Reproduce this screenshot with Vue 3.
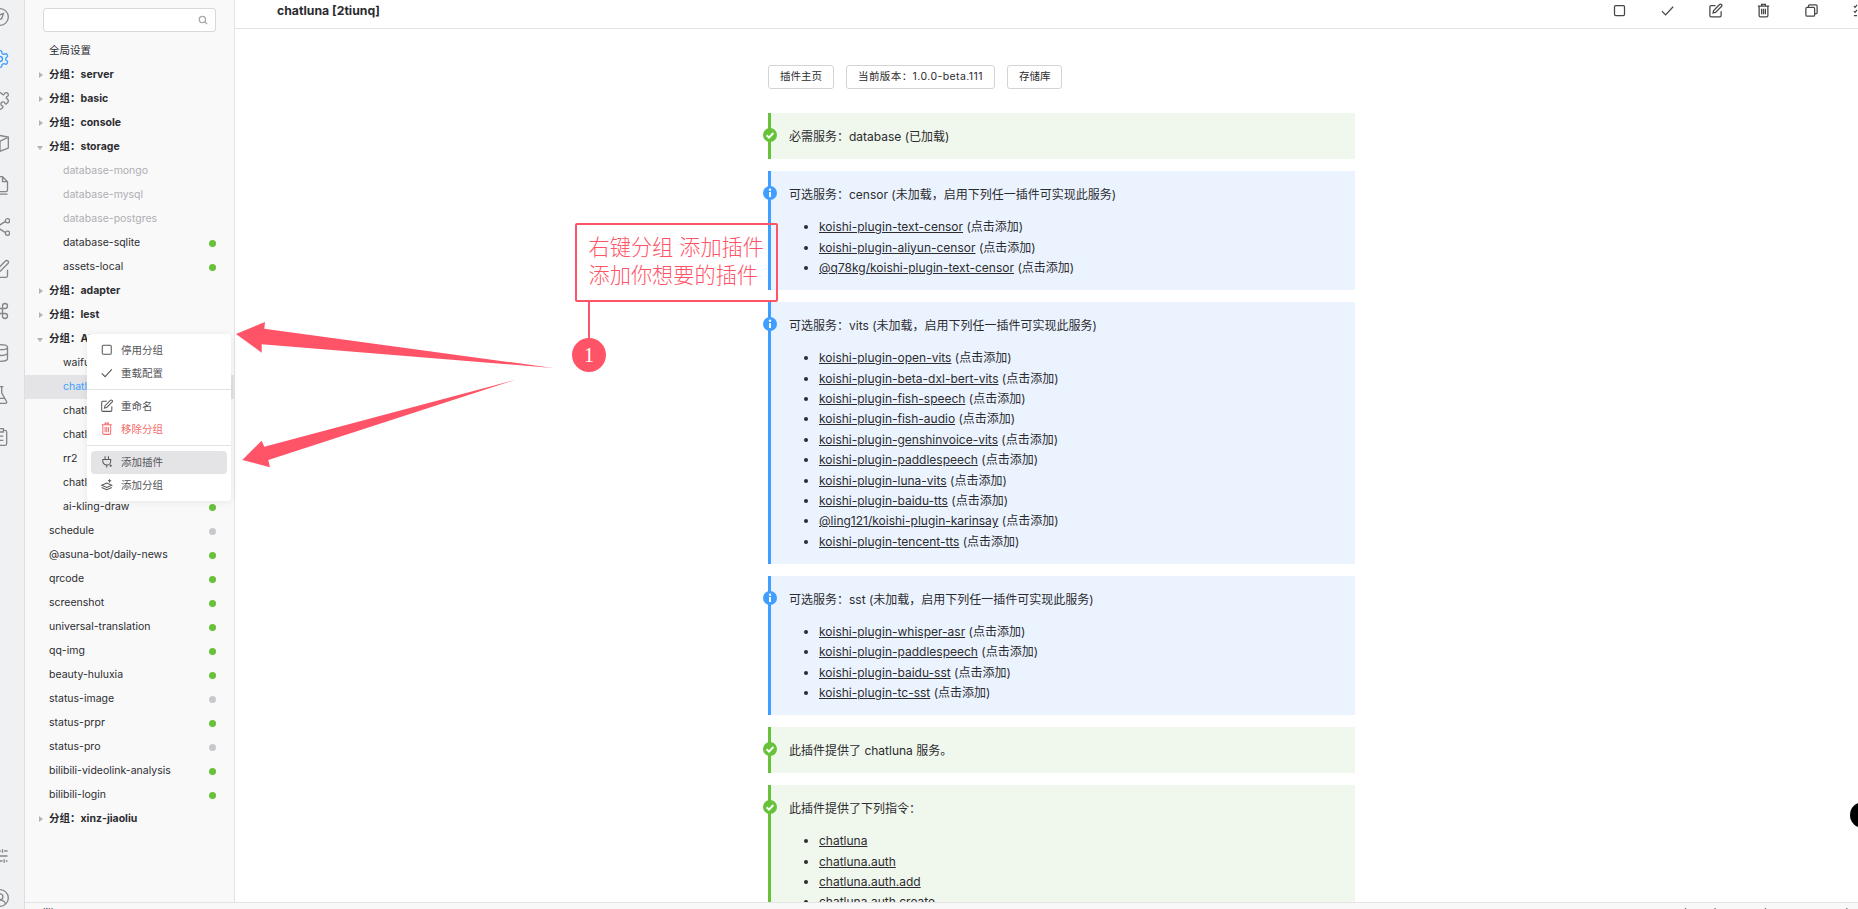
<script setup>
const icons = {
  compass: 'M12 2a10 10 0 1 0 0 20a10 10 0 1 0 0-20z M16 8l-2 6l-6 2l2-6z',
  gear: 'M12.22 2h-.44a2 2 0 0 0-2 2v.18a2 2 0 0 1-1 1.73l-.43.25a2 2 0 0 1-2 0l-.15-.08a2 2 0 0 0-2.73.73l-.22.38a2 2 0 0 0 .73 2.73l.15.1a2 2 0 0 1 1 1.72v.51a2 2 0 0 1-1 1.74l-.15.09a2 2 0 0 0-.73 2.73l.22.38a2 2 0 0 0 2.73.73l.15-.08a2 2 0 0 1 2 0l.43.25a2 2 0 0 1 1 1.73V20a2 2 0 0 0 2 2h.44a2 2 0 0 0 2-2v-.18a2 2 0 0 1 1-1.73l.43-.25a2 2 0 0 1 2 0l.15.08a2 2 0 0 0 2.73-.73l.22-.39a2 2 0 0 0-.73-2.73l-.15-.08a2 2 0 0 1-1-1.74v-.5a2 2 0 0 1 1-1.74l.15-.09a2 2 0 0 0 .73-2.73l-.22-.38a2 2 0 0 0-2.73-.73l-.15.08a2 2 0 0 1-2 0l-.43-.25a2 2 0 0 1-1-1.73V4a2 2 0 0 0-2-2z M12 9a3 3 0 1 0 0 6a3 3 0 1 0 0-6z',
  puzzle: 'M19.439 7.85c-.049.322.059.648.289.878l1.568 1.568c.47.47.706 1.087.706 1.704s-.235 1.233-.706 1.704l-1.611 1.611a.98.98 0 0 1-.837.276c-.47-.07-.802-.48-.968-.925a2.501 2.501 0 1 0-3.214 3.214c.446.166.855.497.925.968a.979.979 0 0 1-.276.837l-1.61 1.61a2.404 2.404 0 0 1-1.705.707 2.402 2.402 0 0 1-1.704-.706l-1.568-1.568a1.026 1.026 0 0 0-.877-.29c-.493.074-.84.504-1.02.968a2.5 2.5 0 1 1-3.237-3.237c.464-.18.894-.527.967-1.02a1.026 1.026 0 0 0-.289-.877l-1.568-1.568A2.402 2.402 0 0 1 1.998 12c0-.617.236-1.234.706-1.704L4.23 8.77c.24-.24.581-.353.917-.303.515.077.877.528 1.073 1.01a2.5 2.5 0 1 0 3.259-3.259c-.482-.196-.933-.558-1.01-1.073-.05-.336.062-.676.303-.917l1.525-1.525A2.402 2.402 0 0 1 12 1.998c.617 0 1.234.236 1.704.706l1.568 1.568c.23.23.556.338.877.29.493-.074.84-.504 1.02-.968a2.5 2.5 0 1 1 3.237 3.237c-.464.18-.894.527-.967 1.02Z',
  box: 'M3 7l9-4l10 2v13l-10 4l-9-3z M3 7l9 3l10-5 M12 10v12',
  file: 'M5 2h10l6 6v10a2 2 0 0 1-2 2H5a2 2 0 0 1-2-2V4a2 2 0 0 1 2-2z M15 2v6h6 M4 23h17',
  share: 'M8 12L19 5M8 12L19 19 M21 2a2.5 2.5 0 1 0 0 5a2.5 2.5 0 1 0 0-5z M21 17a2.5 2.5 0 1 0 0 5a2.5 2.5 0 1 0 0-5z',
  edit: 'M12 4H5a2 2 0 0 0-2 2v14a2 2 0 0 0 2 2h14a2 2 0 0 0 2-2v-7 M18.5 2.5a2.1 2.1 0 0 1 3 3L12 15l-4 1l1-4z',
  command: 'M18 3a3 3 0 0 0-3 3v12a3 3 0 0 0 3 3a3 3 0 0 0 3-3a3 3 0 0 0-3-3H6a3 3 0 0 0-3 3a3 3 0 0 0 3 3a3 3 0 0 0 3-3V6a3 3 0 0 0-3-3a3 3 0 0 0-3 3a3 3 0 0 0 3 3h12a3 3 0 0 0 3-3a3 3 0 0 0-3-3z',
  db: 'M3 5c0-1.7 4-3 9-3s9 1.3 9 3s-4 3-9 3s-9-1.3-9-3z M3 5v14c0 1.7 4 3 9 3s9-1.3 9-3V5 M3 12c0 1.7 4 3 9 3s9-1.3 9-3',
  flask: 'M10 2v7.5L4 20a1.5 1.5 0 0 0 1.3 2h13.4a1.5 1.5 0 0 0 1.3-2L14 9.5V2 M8 2h8 M7 16h10',
  clipboard: 'M8 4H6a2 2 0 0 0-2 2v14a2 2 0 0 0 2 2h12a2 2 0 0 0 2-2V6a2 2 0 0 0-2-2h-2 M8 2h8v4H8z M8 11h8M8 16h8',
  sliders: 'M3 6h10M17 6h4M3 12h3M10 12h11M3 18h12M19 18h2 M15 4v4 M8 10v4 M17 16v4',
  user: 'M12 2a10 10 0 1 0 0 20a10 10 0 1 0 0-20z M12 7a3.5 3.5 0 1 0 0 7a3.5 3.5 0 1 0 0-7z M5.5 19c1-3 3.5-4.5 6.5-4.5s5.500 1.500 6.500 4.500',
  square: 'M6 4h12a2 2 0 0 1 2 2v12a2 2 0 0 1-2 2H6a2 2 0 0 1-2-2V6a2 2 0 0 1 2-2z',
  check: 'M3 13l6 6L21 6',
  trash: 'M9 2h6v3H9z M3 5h18 M5 5v15a2 2 0 0 0 2 2h10a2 2 0 0 0 2-2V5 M9 9v9M12 9v9M15 9v9',
  copy: 'M9 3h10a2 2 0 0 1 2 2v10a2 2 0 0 1-2 2h-2V9a2 2 0 0 0-2-2H7V5a2 2 0 0 1 2-2z M5 7h10a2 2 0 0 1 2 2v10a2 2 0 0 1-2 2H5a2 2 0 0 1-2-2V9a2 2 0 0 1 2-2z',
  list: 'M3 5l2 2l3-4 M3 13l2 2l3-4 M12 5h9M12 13h9 M3 20h5M12 20h9',
  plug: 'M9 2v6M15 2v6M5 8h14v3a7 7 0 0 1-14 0z M12 18v4 M19 17v4M17 19h4',
  layers: 'M12 9L3 13l9 4l9-4z M3 17l9 4l9-4 M17 2v6M14 5h6',
  search: 'M10.500 3a7.500 7.500 0 1 0 0 15a7.500 7.500 0 1 0 0-15z M16 16l6 6',
}
const railTop = [
  ['compass'], ['gear', true], ['puzzle'], ['box'], ['file'], ['share'],
  ['edit'], ['command'], ['db'], ['flask'], ['clipboard'],
]
const rows = [
  { t: '全局设置', k: 'root' },
  { t: '分组：server', k: 'group' }, { t: '分组：basic', k: 'group' }, { t: '分组：console', k: 'group' },
  { t: '分组：storage', k: 'group', open: true },
  { t: 'database-mongo', k: 'child', off: true }, { t: 'database-mysql', k: 'child', off: true },
  { t: 'database-postgres', k: 'child', off: true },
  { t: 'database-sqlite', k: 'child', dot: 'on' }, { t: 'assets-local', k: 'child', dot: 'on' },
  { t: '分组：adapter', k: 'group' }, { t: '分组：lest', k: 'group' },
  { t: '分组：AI', k: 'group', open: true },
  { t: 'waifu', k: 'child', dot: 'on' }, { t: 'chatluna', k: 'child', dot: 'on', active: true },
  { t: 'chatluna-a', k: 'child', dot: 'on' }, { t: 'chatluna-b', k: 'child', dot: 'on' },
  { t: 'rr2', k: 'child', dot: 'on' }, { t: 'chatluna-c', k: 'child', dot: 'on' },
  { t: 'ai-kling-draw', k: 'child', dot: 'on' },
  { t: 'schedule', k: 'root', dot: 'idle' }, { t: '@asuna-bot/daily-news', k: 'root', dot: 'on' },
  { t: 'qrcode', k: 'root', dot: 'on' }, { t: 'screenshot', k: 'root', dot: 'on' },
  { t: 'universal-translation', k: 'root', dot: 'on' }, { t: 'qq-img', k: 'root', dot: 'on' },
  { t: 'beauty-huluxia', k: 'root', dot: 'on' }, { t: 'status-image', k: 'root', dot: 'idle' },
  { t: 'status-prpr', k: 'root', dot: 'on' }, { t: 'status-pro', k: 'root', dot: 'idle' },
  { t: 'bilibili-videolink-analysis', k: 'root', dot: 'on' }, { t: 'bilibili-login', k: 'root', dot: 'on' },
  { t: '分组：xinz-jiaoliu', k: 'group' },
]
const add = ' (点击添加)'
const alerts = [
  { c: 'ok', t: '必需服务：database (已加载)' },
  { c: 'info', t: '可选服务：censor (未加载，启用下列任一插件可实现此服务)', tail: add,
    l: ['koishi-plugin-text-censor', 'koishi-plugin-aliyun-censor', '@q78kg/koishi-plugin-text-censor'] },
  { c: 'info', t: '可选服务：vits (未加载，启用下列任一插件可实现此服务)', tail: add,
    l: ['koishi-plugin-open-vits', 'koishi-plugin-beta-dxl-bert-vits', 'koishi-plugin-fish-speech', 'koishi-plugin-fish-audio', 'koishi-plugin-genshinvoice-vits', 'koishi-plugin-paddlespeech', 'koishi-plugin-luna-vits', 'koishi-plugin-baidu-tts', '@ling121/koishi-plugin-karinsay', 'koishi-plugin-tencent-tts'] },
  { c: 'info', t: '可选服务：sst (未加载，启用下列任一插件可实现此服务)', tail: add,
    l: ['koishi-plugin-whisper-asr', 'koishi-plugin-paddlespeech', 'koishi-plugin-baidu-sst', 'koishi-plugin-tc-sst'] },
  { c: 'ok', t: '此插件提供了 chatluna 服务。' },
  { c: 'ok', t: '此插件提供了下列指令：', tail: '',
    l: ['chatluna', 'chatluna.auth', 'chatluna.auth.add', 'chatluna.auth.create'] },
]
const menu = [
  [{ i: 'square', t: '停用分组' }, { i: 'check', t: '重载配置' }],
  [{ i: 'edit', t: '重命名' }, { i: 'trash', t: '移除分组', red: true }],
  [{ i: 'plug', t: '添加插件', hover: true }, { i: 'layers', t: '添加分组' }],
]
</script>

<template>
  <div class="page">
    <nav class="rail">
      <div class="rail-top">
        <div v-for="r in railTop" :key="r[0]" class="rail-item" :class="{ on: r[1] }">
          <svg viewBox="0 0 24 24" class="rail-icon"><path :d="icons[r[0]]" /></svg>
        </div>
      </div>
      <div class="rail-bottom">
        <div class="rail-item"><svg viewBox="0 0 24 24" class="rail-icon"><path :d="icons.sliders" /></svg></div>
        <div class="rail-item"><svg viewBox="0 0 24 24" class="rail-icon"><path :d="icons.user" /></svg></div>
      </div>
    </nav>

    <div class="shell">
      <div class="work">
        <aside class="side">
          <div class="search">
            <svg viewBox="0 0 24 24" class="search-icon"><path :d="icons.search" /></svg>
          </div>
          <div
            v-for="r in rows"
            :key="r.t"
            class="row"
            :class="[r.k, { off: r.off, active: r.active }]"
          >
            <span v-if="r.k === 'group'" class="caret" :class="{ open: r.open }"></span>
            <span class="row-text">{{ r.t }}</span>
            <span v-if="r.dot" class="dot" :class="r.dot"></span>
          </div>
        </aside>

        <main class="main">
          <header class="head">
            <b class="title">chatluna [2tiunq]</b>
            <div class="tools">
              <svg v-for="n in ['square', 'check', 'edit', 'trash', 'copy', 'list']" :key="n" viewBox="0 0 24 24" class="tool"><path :d="icons[n]" /></svg>
            </div>
          </header>
          <section class="body">
            <div class="links">
              <span class="btn">插件主页</span>
              <span class="btn version">当前版本：1.0.0-beta.111</span>
              <span class="btn">存储库</span>
            </div>
            <div v-for="a in alerts" :key="a.t" class="alert" :class="[a.c, { listed: a.l }]">
              <svg class="badge" viewBox="0 0 14 14">
                <circle cx="7" cy="7" r="7" class="badge-bg" />
                <path v-if="a.c === 'ok'" d="M3.600 7.200l2.400 2.400l4.400-4.600" class="badge-check" />
                <template v-else>
                  <circle cx="7" cy="3.800" r="1.200" class="badge-dot" />
                  <path d="M7 6v5" class="badge-i" />
                </template>
              </svg>
              <p class="alert-title">{{ a.t }}</p>
              <ul v-if="a.l" class="alert-list">
                <li v-for="x in a.l" :key="x"><a class="plugin">{{ x }}</a>{{ a.tail }}</li>
              </ul>
            </div>
          </section>
        </main>
      </div>
      <footer class="status">
        <span>lill</span>
        <span class="status-right"><span>l</span><span>b</span><span>d</span><span>b</span></span>
      </footer>
    </div>

    <div class="ctx">
      <template v-for="(g, gi) in menu" :key="gi">
        <hr v-if="gi" class="ctx-line" />
        <div v-for="m in g" :key="m.t" class="ctx-item" :class="{ red: m.red, hover: m.hover }">
          <svg viewBox="0 0 24 24" class="ctx-icon"><path :d="icons[m.i]" /></svg>
          <span class="ctx-text">{{ m.t }}</span>
        </div>
      </template>
    </div>

    <svg class="arrows" viewBox="0 0 1858 909">
      <polygon points="236,334 265,322 264.300,328.700 553,368 261.700,344.300 261.700,352.700" />
      <polygon points="242.300,460 261.700,440.700 264.300,446.700 515,380 268.300,460 270,467.300" />
    </svg>
    <div class="note">右键分组 添加插件<br />添加你想要的插件</div>
    <div class="stem"></div>
    <div class="pin">1</div>
    <div class="float-ball"></div>
  </div>
</template>

<style>
html, body { margin: 0; overflow: hidden; }
</style>

<style scoped>
.page {
  position: relative;
  display: flex;
  width: 1858px;
  height: 909px;
  overflow: hidden;
  background: #fff;
  color: #2c2c30;
  font: 10.5px/20px Inter, "Noto Sans CJK SC", sans-serif;
}
.rail {
  flex: 0 0 24px;
  display: flex;
  flex-direction: column;
  justify-content: space-between;
  overflow: hidden;
  background: #f0f1f3;
  border-right: 1px solid #dedee1;
}
.rail-top { margin-top: -4px; }
.rail-bottom { margin-bottom: -10px; }
.rail-item {
  height: 42px;
  display: flex;
  align-items: center;
  color: #85858b;
}
.rail-item.on { color: #409eff; }
.rail-icon {
  flex: none;
  width: 20px;
  height: 20px;
  margin-left: -10px;
  fill: none;
  stroke: currentColor;
  stroke-width: 1.6;
}
.shell {
  flex: 1;
  min-width: 0;
  display: flex;
  flex-direction: column;
}
.work {
  flex: 1;
  min-height: 0;
  display: flex;
}
.side {
  flex: 0 0 209px;
  background: #f9f9fa;
  border-right: 1px solid #e3e3e5;
  overflow: hidden;
}
.search {
  height: 22px;
  margin: 8px 18px 7px 18px;
  border: 1px solid #d8d8da;
  border-radius: 3px;
  background: #fff;
  display: flex;
  align-items: center;
  justify-content: flex-end;
  padding-right: 7px;
}
.search-icon {
  width: 10px;
  height: 10px;
  fill: none;
  stroke: #a8a8ac;
  stroke-width: 3;
}
.row {
  position: relative;
  height: 24px;
  display: flex;
  align-items: center;
  line-height: 24px;
  padding: 0 18px 0 24px;
  white-space: nowrap;
}
.row.child { padding-left: 38px; }
.row.group { font-weight: 700; }
.row.off { color: #aeaeb2; }
.row.active { background: #e4e4e6; color: #409eff; }
.row-text { flex: 1; }
.caret {
  position: absolute;
  left: 14px;
  top: 9px;
  border-style: solid;
  border-width: 3px 0 3px 4px;
  border-color: transparent transparent transparent #b4b4b8;
}
.caret.open {
  left: 12px;
  top: 10.500px;
  border-width: 4px 3px 0 3px;
  border-color: #b4b4b8 transparent transparent transparent;
}
.dot {
  width: 7px;
  height: 7px;
  border-radius: 50%;
}
.dot.on { background: #67c23a; }
.dot.idle { background: #c8c8cc; }
.main {
  flex: 1;
  min-width: 0;
  overflow: hidden;
  background: #fff;
}
.head {
  height: 28px;
  box-sizing: content-box;
  display: flex;
  align-items: center;
  justify-content: space-between;
  padding: 0 0 0 42px;
  border-bottom: 1px solid #e4e4e6;
  margin-bottom: -1px;
}
.title {
  font-size: 12.250px;
  font-weight: 700;
  margin-top: -6px;
}
.tools {
  display: flex;
  gap: 33px;
  margin-right: -8.500px;
  margin-top: -8px;
}
.tool {
  width: 15px;
  height: 15px;
  fill: none;
  stroke: #46464a;
  stroke-width: 2;
}
.body {
  width: 587px;
  margin-left: 533px;
  padding-top: 37px;
}
.links {
  display: flex;
  gap: 12px;
  margin-bottom: 24px;
}
.btn {
  height: 24px;
  box-sizing: border-box;
  line-height: 22px;
  padding: 0 11px;
  border: 1px solid #d4d4d6;
  border-radius: 3px;
}
.btn.version { letter-spacing: .42px; }
.alert {
  position: relative;
  margin-bottom: 12px;
  padding: 13.500px 16px 12.300px 18px;
  border-left: 3px solid;
  font-size: 12px;
}
.alert.listed {
  padding-top: 14.300px;
  padding-bottom: 11.500px;
}
.alert.ok { background: #f0f7ec; border-color: #67c23a; }
.alert.info { background: #ebf3ff; border-color: #409eff; }
.badge {
  position: absolute;
  left: -8.500px;
  top: 15px;
  width: 14px;
  height: 14px;
}
.ok .badge-bg { fill: #67c23a; }
.info .badge-bg { fill: #409eff; }
.badge-check {
  fill: none;
  stroke: #fff;
  stroke-width: 2;
}
.badge-dot { fill: #fff; }
.badge-i {
  fill: none;
  stroke: #fff;
  stroke-width: 2;
}
.alert-title { margin: 0; }
.listed .alert-title { margin-bottom: 12px; }
.alert-list {
  margin: 0;
  padding: 0 0 0 30px;
  line-height: 20.400px;
}
.plugin { text-decoration: underline; }
.status {
  flex: 0 0 7px;
  box-sizing: border-box;
  height: 7px;
  overflow: hidden;
  display: flex;
  justify-content: space-between;
  padding: 0 6px 0 18px;
  background: #f8f8f9;
  border-top: 1px solid #e3e3e5;
  line-height: 20px;
  color: #444;
}
.status-right { display: flex; }
.status-right span + span { margin-left: 27px; }
.status-right span:nth-child(3) { margin-left: 40px; }
.status-right span:nth-child(4) { margin-left: 79px; }
.ctx {
  position: absolute;
  left: 87px;
  top: 334px;
  width: 144px;
  height: 167px;
  box-sizing: border-box;
  padding: 4.500px 0;
  background: #fff;
  border-radius: 4px;
  box-shadow: 0 1px 8px rgba(0, 0, 0, .08);
  color: #55555a;
}
.ctx-line {
  height: 1px;
  margin: 4.500px 0;
  border: 0;
  background: #e3e3e5;
}
.ctx-item {
  height: 23px;
  margin: 0 4px;
  padding-left: 8.500px;
  display: flex;
  align-items: center;
  gap: 8px;
  border-radius: 4px;
}
.ctx-text { margin-top: 2px; }
.ctx-item.red { color: #f56c6c; }
.ctx-item.hover { background: #e4e4e6; }
.ctx-icon {
  width: 13.500px;
  height: 13.500px;
  fill: none;
  stroke: currentColor;
  stroke-width: 1.800;
}
.arrows {
  position: absolute;
  inset: 0;
  width: 1858px;
  height: 909px;
  pointer-events: none;
}
.arrows polygon { fill: #ff5468; }
.note {
  position: absolute;
  left: 575px;
  top: 223px;
  width: 203px;
  height: 79px;
  box-sizing: border-box;
  padding: 8px 0 0 11.500px;
  border: 2px solid #ff5468;
  border-radius: 2px;
  color: #ff5468;
  font-size: 21.200px;
  line-height: 28px;
  font-weight: 300;
  white-space: nowrap;
}
.stem {
  position: absolute;
  left: 588px;
  top: 302px;
  width: 2px;
  height: 38px;
  background: #ff5468;
}
.pin {
  position: absolute;
  left: 572px;
  top: 338px;
  width: 34px;
  height: 34px;
  border-radius: 50%;
  background: #ff5468;
  color: #fff;
  text-align: center;
  font: 20px/34px "Liberation Serif", serif;
}
.float-ball {
  position: absolute;
  left: 1850px;
  top: 802px;
  width: 26px;
  height: 26px;
  border-radius: 50%;
  background: #000;
}
</style>
